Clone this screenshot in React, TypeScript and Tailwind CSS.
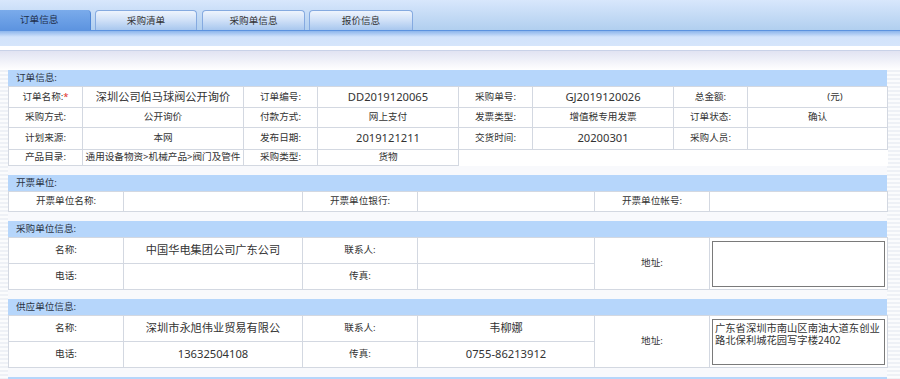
import React from "react";

const FONT = "font-['Noto_Sans','Noto_Sans_CJK_SC',sans-serif]";
const TD = "border border-[#d3d8e1] text-center align-middle p-0 text-[#333]";
const LBL = `${TD} text-[9.6px]`;
const BIG = `${TD} text-[11.2px]`;
const SML = `${TD} text-[9.6px]`;

function Header({ title }: { title: string }) {
  return (
    <div className="h-[16px] bg-[#b6d6fb] pl-[8px] text-[9.6px] leading-[16px] text-[#2b3444]">
      {title}
    </div>
  );
}

function Tab({ label, w, active }: { label: string; w: string; active?: boolean }) {
  if (active) {
    return (
      <div
        className={`${w} h-[20px] pl-[20px] rounded-tr-[4px] border-r border-[#4f86d6] bg-linear-to-b from-[#7aabeb] to-[#5d94e0] text-[9.6px] leading-[20px] text-[#1f2f4c]`}
      >
        {label}
      </div>
    );
  }
  return (
    <div
      className={`${w} h-[20px] rounded-t-[4px] border border-b-0 border-[#85aae0] bg-linear-to-b from-[#eef4fd] via-[#cfe0f7] to-[#a8c7ee] text-center text-[9.6px] leading-[19px] text-[#333]`}
    >
      {label}
    </div>
  );
}

function SixCols() {
  return (
    <colgroup>
      <col className="w-[115px]" />
      <col className="w-[179px]" />
      <col className="w-[115px]" />
      <col className="w-[177px]" />
      <col className="w-[115px]" />
      <col className="w-[178px]" />
    </colgroup>
  );
}

const TA =
  "block w-full h-[46px] resize-none border border-[#7a7a7a] bg-white px-[2px] py-[2px] text-left text-[10.3px] leading-[12.6px] text-[#333] outline-none font-['Noto_Sans_CJK_SC',sans-serif]";

export default function App() {
  return (
    <div className={`${FONT} w-full h-[379px] overflow-hidden bg-white`}>
      {/* top tab bar */}
      <div className="h-[30px] bg-linear-to-b from-[#d8e7fc] to-[#b1cfef] flex items-end">
        <Tab label="订单信息" w="w-[91px]" active />
        <div className="w-[4px]" />
        <Tab label="采购清单" w="w-[102px]" />
        <div className="w-[5px]" />
        <Tab label="采购单信息" w="w-[103px]" />
        <div className="w-[4px]" />
        <Tab label="报价信息" w="w-[104px]" />
      </div>
      <div className="h-[1px] bg-[#5b92df]" />
      <div className="h-[15px] bg-[linear-gradient(180deg,#8cb5ec_0px,#d2e3fb_6px,#d5e5fb_15px)]" />
      <div className="h-[4px] bg-white" />
      <div className="h-[1px] bg-[#c9d2e8]" />
      <div className="h-[19px] bg-linear-to-b from-[#e1e3f2] to-[#ffffff]" />

      {/* body */}
      <div className="h-[320px] flex bg-[repeating-linear-gradient(180deg,#eef1f6_0px,#eef1f6_2px,#fbfcfd_2px,#fbfcfd_4px)]">
        <div className="w-[8px] shrink-0" />
        <div className="w-[879px] shrink-0 bg-[#f8f9fc]">
          {/* 订单信息 */}
          <Header title="订单信息:" />
          <table className="table-fixed border-collapse bg-white w-[879px]">
            <colgroup>
              <col className="w-[74px]" />
              <col className="w-[161px]" />
              <col className="w-[74px]" />
              <col className="w-[141px]" />
              <col className="w-[74px]" />
              <col className="w-[141px]" />
              <col className="w-[74px]" />
              <col className="w-[140px]" />
            </colgroup>
            <tbody>
              <tr className="h-[21px]">
                <td className={LBL}>
                  订单名称:<span className="text-[#e0302a]">*</span>
                </td>
                <td className={BIG}>深圳公司伯马球阀公开询价</td>
                <td className={LBL}>订单编号:</td>
                <td className={BIG}>DD2019120065</td>
                <td className={LBL}>采购单号:</td>
                <td className={BIG}>GJ2019120026</td>
                <td className={LBL}>总金额:</td>
                <td className={`${SML} pl-[35px]`}>(元)</td>
              </tr>
              <tr className="h-[20px]">
                <td className={LBL}>采购方式:</td>
                <td className={SML}>公开询价</td>
                <td className={LBL}>付款方式:</td>
                <td className={SML}>网上支付</td>
                <td className={LBL}>发票类型:</td>
                <td className={SML}>增值税专用发票</td>
                <td className={LBL}>订单状态:</td>
                <td className={SML}>确认</td>
              </tr>
              <tr className="h-[22px]">
                <td className={LBL}>计划来源:</td>
                <td className={SML}>本网</td>
                <td className={LBL}>发布日期:</td>
                <td className={BIG}>2019121211</td>
                <td className={LBL}>交货时间:</td>
                <td className={BIG}>20200301</td>
                <td className={LBL}>采购人员:</td>
                <td className={SML}></td>
              </tr>
              <tr className="h-[16px]">
                <td className={LBL}>产品目录:</td>
                <td className={`${SML} whitespace-nowrap`}>通用设备物资&gt;机械产品&gt;阀门及管件</td>
                <td className={LBL}>采购类型:</td>
                <td className={SML}>货物</td>
              </tr>
            </tbody>
          </table>

          <div className="h-[9px]" />
          {/* 开票单位 */}
          <Header title="开票单位:" />
          <table className="table-fixed border-collapse bg-white w-[879px]">
            <SixCols />
            <tbody>
              <tr className="h-[20px]">
                <td className={LBL}>开票单位名称:</td>
                <td className={SML}></td>
                <td className={LBL}>开票单位银行:</td>
                <td className={SML}></td>
                <td className={LBL}>开票单位帐号:</td>
                <td className={SML}></td>
              </tr>
            </tbody>
          </table>

          <div className="h-[9px]" />
          {/* 采购单位信息 */}
          <Header title="采购单位信息:" />
          <table className="table-fixed border-collapse bg-white w-[879px]">
            <SixCols />
            <tbody>
              <tr className="h-[26px]">
                <td className={LBL}>名称:</td>
                <td className={BIG}>中国华电集团公司广东公司</td>
                <td className={LBL}>联系人:</td>
                <td className={BIG}></td>
                <td className={LBL} rowSpan={2}>地址:</td>
                <td className={`${TD} px-[2px]`} rowSpan={2}>
                  <textarea readOnly value="" className={TA} />
                </td>
              </tr>
              <tr className="h-[26px]">
                <td className={LBL}>电话:</td>
                <td className={BIG}></td>
                <td className={LBL}>传真:</td>
                <td className={BIG}></td>
              </tr>
            </tbody>
          </table>

          <div className="h-[9px]" />
          {/* 供应单位信息 */}
          <Header title="供应单位信息:" />
          <table className="table-fixed border-collapse bg-white w-[879px]">
            <SixCols />
            <tbody>
              <tr className="h-[26px]">
                <td className={LBL}>名称:</td>
                <td className={BIG}>深圳市永旭伟业贸易有限公</td>
                <td className={LBL}>联系人:</td>
                <td className={BIG}>韦柳娜</td>
                <td className={LBL} rowSpan={2}>地址:</td>
                <td className={`${TD} px-[2px]`} rowSpan={2}>
                  <textarea
                    readOnly
                    value="广东省深圳市南山区南油大道东创业路北保利城花园写字楼2402"
                    className={TA}
                  />
                </td>
              </tr>
              <tr className="h-[26px]">
                <td className={LBL}>电话:</td>
                <td className={BIG}>13632504108</td>
                <td className={LBL}>传真:</td>
                <td className={BIG}>0755-86213912</td>
              </tr>
            </tbody>
          </table>

          <div className="h-[9px]" />
          <div className="h-[16px] bg-[#b6d6fb]" />
        </div>
        <div className="flex-1" />
      </div>
    </div>
  );
}
